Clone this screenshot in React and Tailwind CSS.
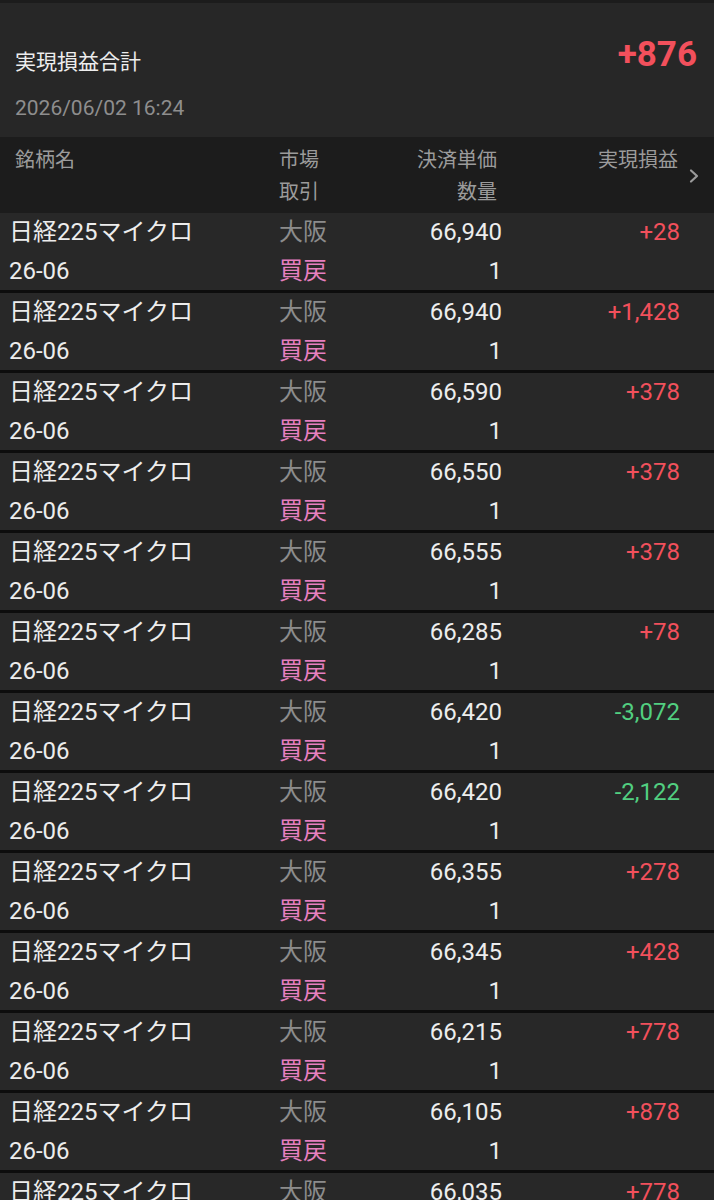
import React from 'react';

const rows = [
	{ price: '66,940', pnl: '+28' },
	{ price: '66,940', pnl: '+1,428' },
	{ price: '66,590', pnl: '+378' },
	{ price: '66,550', pnl: '+378' },
	{ price: '66,555', pnl: '+378' },
	{ price: '66,285', pnl: '+78' },
	{ price: '66,420', pnl: '-3,072' },
	{ price: '66,420', pnl: '-2,122' },
	{ price: '66,355', pnl: '+278' },
	{ price: '66,345', pnl: '+428' },
	{ price: '66,215', pnl: '+778' },
	{ price: '66,105', pnl: '+878' },
	{ price: '66,035', pnl: '+778' },
];

export default function App() {
	return (
		<div
			className="w-[714px] h-[1200px] overflow-hidden bg-[#282828] text-[#ededed]"
			style={{ fontFamily: 'Roboto, "Noto Sans CJK JP", sans-serif' }}
		>
			<div className="h-[3px] bg-[#1c1c1c]" />

			{/* summary */}
			<div className="h-[134px] bg-[#272727] pl-[15px] pr-[17px] pt-[31px]">
				<div className="flex justify-between items-start">
					<div className="mt-[14px] text-[21px] leading-[28px]">実現損益合計</div>
					<div className="text-[35px] leading-[42px] font-bold text-[#f2505c]">+876</div>
				</div>
				<div className="mt-[18px] text-[21px] leading-[28px] text-[#8e8e8e]">
					2026/06/02 16:24
				</div>
			</div>

			{/* header */}
			<div className="h-[76px] bg-[#1c1c1c] pl-[10px] pt-[7px] grid grid-cols-[269px_80px_143px_178px_1fr] text-[20px] leading-[32px] text-[#9b9b9b]">
				<div className="pl-[5px]">銘柄名</div>
				<div>
					<div>市場</div>
					<div>取引</div>
				</div>
				<div className="text-right pr-[5px]">
					<div>決済単価</div>
					<div>数量</div>
				</div>
				<div className="text-right pr-[2px]">実現損益</div>
				<div className="flex items-center h-[64px] pl-[8px]">
					<svg width="12" height="16" viewBox="0 0 12 16" fill="none">
						<path d="M3 2.5 L9 8 L3 13.5" stroke="#9b9b9b" strokeWidth="2.2" strokeLinecap="round" strokeLinejoin="round" />
					</svg>
				</div>
			</div>

			{/* rows */}
			{rows.map((r, i) => (
				<div
					key={i}
					className="h-[80px] bg-[#282828] border-b-[3px] border-[#0d0d0d] pl-[9px] grid grid-cols-[270px_80px_143px_178px_1fr] text-[24px] leading-[39px]"
				>
					<div>
						<div>日経225マイクロ</div>
						<div>26-06</div>
					</div>
					<div>
						<div className="text-[#8c8c8c]">大阪</div>
						<div className="text-[#e67fbf]">買戻</div>
					</div>
					<div className="text-right">
						<div>{r.price}</div>
						<div>1</div>
					</div>
					<div
						className={
							'text-right ' +
							(r.pnl.startsWith('-') ? 'text-[#52cf80]' : 'text-[#f2505c]')
						}
					>
						{r.pnl}
					</div>
					<div />
				</div>
			))}
		</div>
	);
}
